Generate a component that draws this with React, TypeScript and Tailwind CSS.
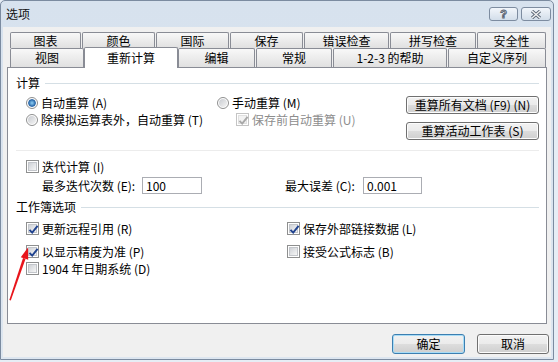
import React from 'react';

const topTabs = [
  { label: '图表', w: 'w-[71px]' },
  { label: '颜色', w: 'w-[73px]' },
  { label: '国际', w: 'w-[73px]' },
  { label: '保存', w: 'w-[73px]' },
  { label: '错误检查', w: 'w-[85px]' },
  { label: '拼写检查', w: 'w-[86px]' },
  { label: '安全性', w: 'w-[69px]' },
];

const tabBase =
  'flex items-center justify-center border border-b-0 border-[#898c95] rounded-t-[2px] bg-linear-to-b from-[#f8f8f8] to-[#e0e0e0] leading-none';

function CheckBox({ checked, disabled }: { checked?: boolean; disabled?: boolean }) {
  return (
    <span
      className={`relative flex items-center justify-center w-[13px] h-[13px] shrink-0 border bg-white ${
        disabled ? 'border-[#c4c4c4]' : 'border-[#8e8f8f]'
      }`}
    >
      <span
        className={`w-[9px] h-[9px] border ${
          disabled
            ? 'border-[#e0e0e0] bg-[#f2f2f2]'
            : 'border-[#c3c6cb] bg-linear-to-br from-[#cfd2d7] to-[#f6f6f6]'
        }`}
      />
      {checked && (
        <svg className="absolute left-[1px] top-[1px]" width="11" height="11" viewBox="0 0 11 11">
          <path
            d="M1.5 5.8 L4.2 8.6 L9.6 1.8"
            fill="none"
            stroke={disabled ? '#a8a8a8' : '#20438f'}
            strokeWidth="1.9"
          />
        </svg>
      )}
    </span>
  );
}

function Radio({ checked }: { checked?: boolean }) {
  return (
    <span className="flex items-center justify-center w-[12px] h-[12px] shrink-0 rounded-full border border-[#8e8f8f] bg-white">
      {checked ? (
        <span className="w-[8px] h-[8px] rounded-full border border-[#2a67a8] bg-radial from-[#8fd0f5] to-[#14549a]" />
      ) : (
        <span className="w-[8px] h-[8px] rounded-full bg-linear-to-br from-[#c9ccd1] to-[#f4f4f4]" />
      )}
    </span>
  );
}

function WinButton({ children, primary }: { children: React.ReactNode; primary?: boolean }) {
  return (
    <div
      className={`flex items-center justify-center rounded-[3px] border leading-none bg-[linear-gradient(#f2f2f2_0%,#ebebeb_50%,#dddddd_50%,#cfcfcf_100%)] ${
        primary ? 'border-[#3c7fb1] shadow-[inset_0_0_0_1px_#a8dcf6]' : 'border-[#707070] shadow-[inset_0_0_0_1px_#fcfcfc]'
      }`}
    >
      {children}
    </div>
  );
}

function GroupHeader({ title }: { title: string }) {
  return (
    <div className="flex items-center h-[14px] pr-[7px]">
      <span className="leading-none">{title}</span>
      <div className="flex-1 h-px bg-[#d5dfe5] ml-[5px]" />
    </div>
  );
}

function Option({ children, control, gray }: { children: React.ReactNode; control: React.ReactNode; gray?: boolean }) {
  return (
    <div className={`flex items-center h-[17px] gap-[3px] ${gray ? 'text-[#8d8d8d]' : ''}`}>
      {control}
      <span className="leading-none whitespace-nowrap">{children}</span>
    </div>
  );
}

export default function App() {
  return (
    <div className="relative w-[558px] h-[362px] bg-[#e6edf5] overflow-hidden text-[12px] text-black font-['Noto_Sans_CJK_SC',sans-serif]">
      <div className="w-[554px] h-[360px] border border-[#7b8ba0] rounded-t-[5px] bg-linear-to-b from-[#d7e2ee] to-[#dde6f0] flex flex-col px-[2px] pb-[2px]">
        {/* title bar */}
        <div className="h-[26px] flex items-center pl-[3px] pr-0">
          <span className="leading-none text-[#111]">选项</span>
          <div className="ml-auto flex items-center gap-[3px]">
            <div className="w-[29px] h-[14px] rounded-[3px] border border-[#7d8ca0] bg-linear-to-b from-[#f2f6fb] to-[#d3deea] flex items-center justify-center">
              <span className="text-[11px] leading-none font-bold text-[#f4f4f4] [-webkit-text-stroke:1px_#5b6675] font-['Liberation_Sans',sans-serif]">?</span>
            </div>
            <div className="w-[30px] h-[14px] rounded-[3px] border border-[#7d8ca0] bg-linear-to-b from-[#f2f6fb] to-[#d3deea] flex items-center justify-center">
              <svg width="12" height="9" viewBox="0 0 12 9">
                <path d="M2 1 L10 8 M10 1 L2 8" stroke="#5b6675" strokeWidth="3.2" />
                <path d="M2 1 L10 8 M10 1 L2 8" stroke="#f2f2f2" strokeWidth="1.4" />
              </svg>
            </div>
          </div>
        </div>

        {/* client area */}
        <div className="flex-1 bg-[#f0f0f0] flex flex-col pt-[5px]">
          {/* tabs */}
          <div className="pl-[7px]">
            <div className="flex gap-[1px] h-[16px]">
              {topTabs.map((t) => (
                <div key={t.label} className={`${tabBase} ${t.w} h-[16px] pt-[1px]`}>
                  {t.label}
                </div>
              ))}
            </div>
            <div className="flex items-end h-[19px]">
              <div className={`${tabBase} w-[74px] h-[19px]`}>视图</div>
              <div className="relative z-10 w-[94px] h-[21px] -mb-px flex items-center justify-center border border-b-0 border-[#898c95] rounded-t-[2px] bg-white leading-none">
                重新计算
              </div>
              <div className={`${tabBase} w-[77px] h-[19px]`}>编辑</div>
              <div className={`${tabBase} w-[76px] h-[19px] ml-[1px]`}>常规</div>
              <div className={`${tabBase} w-[114px] h-[19px] ml-[1px]`}>1-2-3 的帮助</div>
              <div className={`${tabBase} w-[98px] h-[19px] ml-[1px]`}>自定义序列</div>
            </div>
          </div>

          {/* panel */}
          <div className="mx-[4px] h-[257px] border border-[#898c95] bg-white pl-[8px] pt-[8px]">
            <GroupHeader title="计算" />

            <div className="flex mt-[4px]">
              <div className="ml-[10px] w-[191px]">
                <Option control={<Radio checked />}>自动重算 (A)</Option>
                <Option control={<Radio />}>除模拟运算表外，自动重算 (T)</Option>
              </div>
              <div className="w-[189px]">
                <Option control={<Radio />}>手动重算 (M)</Option>
                <div className="pl-[19px]">
                  <Option gray control={<CheckBox checked disabled />}>
                    保存前自动重算 (U)
                  </Option>
                </div>
              </div>
              <div className="w-[133px] pt-[2px] flex flex-col gap-[8px]">
                <div className="h-[18px] flex flex-col">
                  <WinButton>
                    <span className="h-[16px] flex items-center">重算所有文档 (F9) (N)</span>
                  </WinButton>
                </div>
                <div className="h-[18px] flex flex-col">
                  <WinButton>
                    <span className="h-[16px] flex items-center">重算活动工作表 (S)</span>
                  </WinButton>
                </div>
              </div>
            </div>

            <div className="mt-[10px] mr-[7px] h-px bg-[#ececec]" />

            <div className="ml-[10px] mt-[7px]">
              <Option control={<CheckBox />}>迭代计算 (I)</Option>
            </div>
            <div className="flex items-center h-[17px] mt-[2px]">
              <div className="w-[269px] pl-[26px] flex items-center">
                <span className="w-[100px] leading-none">最多迭代次数 (E):</span>
                <div className="w-[60px] h-[17px] border border-[#abadb3] bg-white flex items-center pl-[3px] leading-none">
                  100
                </div>
              </div>
              <span className="w-[78px] leading-none">最大误差 (C):</span>
              <div className="w-[59px] h-[17px] border border-[#abadb3] bg-white flex items-center pl-[3px] leading-none">
                0.001
              </div>
            </div>

            <div className="mt-[6px]">
              <GroupHeader title="工作簿选项" />
            </div>

            <div className="grid grid-cols-[261px_1fr] ml-[10px] mt-[6px]">
              <Option control={<CheckBox checked />}>更新远程引用 (R)</Option>
              <Option control={<CheckBox checked />}>保存外部链接数据 (L)</Option>
              <div className="mt-[6px]">
                <Option control={<CheckBox checked />}>以显示精度为准 (P)</Option>
              </div>
              <div className="mt-[6px]">
                <Option control={<CheckBox />}>接受公式标志 (B)</Option>
              </div>
              <Option control={<CheckBox />}>1904 年日期系统 (D)</Option>
            </div>
          </div>

          {/* dialog buttons */}
          <div className="flex justify-end gap-[12px] mt-[10px] pr-[2px]">
            <div className="w-[73px] h-[20px] flex flex-col">
              <WinButton primary>
                <span className="h-[18px] flex items-center">确定</span>
              </WinButton>
            </div>
            <div className="w-[72px] h-[20px] flex flex-col">
              <WinButton>
                <span className="h-[18px] flex items-center">取消</span>
              </WinButton>
            </div>
          </div>
        </div>
      </div>

      {/* red annotation arrow */}
      <svg className="absolute left-0 top-0 pointer-events-none" width="558" height="362" viewBox="0 0 558 362">
        <polygon points="9.3,300 10.8,300.4 25.6,258.8 23,257.9" fill="#e8141b" />
        <polygon points="28,247.5 28.2,259.8 20.8,257.2" fill="#e8141b" />
      </svg>
    </div>
  );
}
